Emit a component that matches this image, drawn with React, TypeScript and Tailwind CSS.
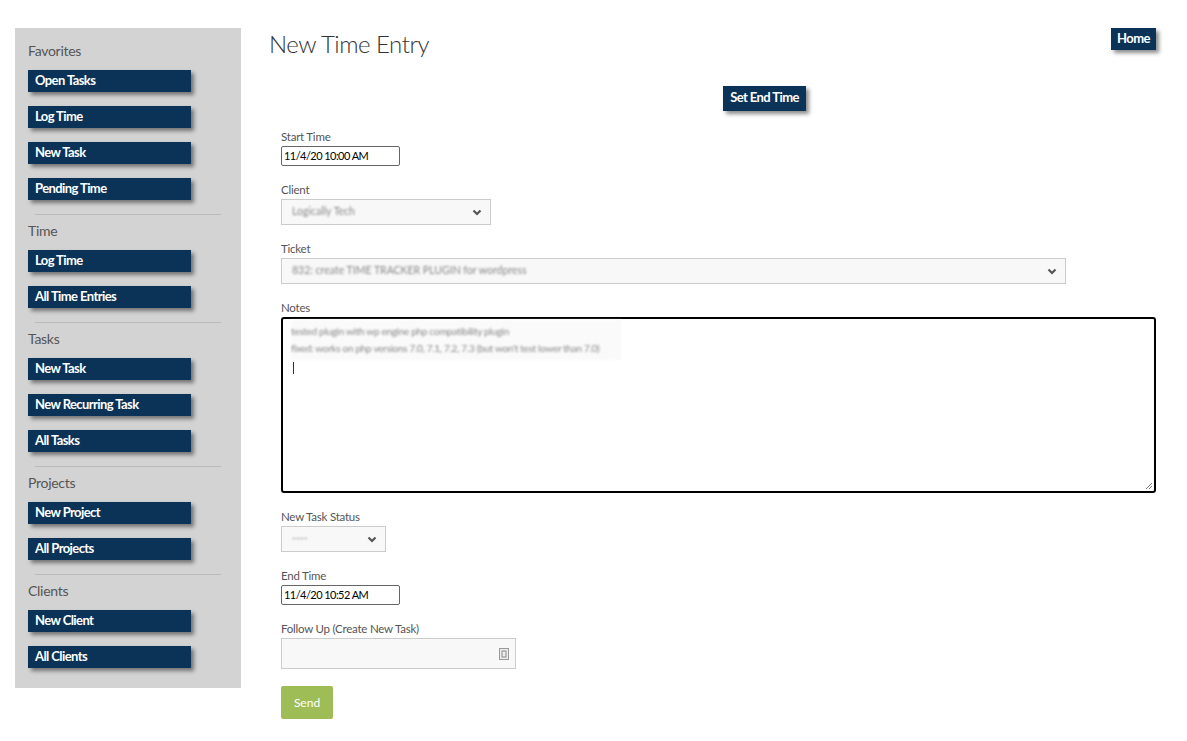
const font = { fontFamily: "Lato, 'Open Sans', sans-serif" };

const sections: { title: string; links: string[] }[] = [
  { title: "Favorites", links: ["Open Tasks", "Log Time", "New Task", "Pending Time"] },
  { title: "Time", links: ["Log Time", "All Time Entries"] },
  { title: "Tasks", links: ["New Task", "New Recurring Task", "All Tasks"] },
  { title: "Projects", links: ["New Project", "All Projects"] },
  { title: "Clients", links: ["New Client", "All Clients"] },
];

function NavButton({ label, className = "" }: { label: string; className?: string }) {
  return (
    <button
      className={`flex h-[22px] items-center bg-[#0b3358] pb-px text-[13px] font-bold tracking-[-0.045em] text-white shadow-[3px_3px_4px_rgba(0,0,0,0.45)] ${className}`}
    >
      {label}
    </button>
  );
}

function Chevron() {
  return (
    <svg width="10" height="7" viewBox="0 0 10 7" className="shrink-0">
      <path d="M1.5 1.5 L5 5 L8.5 1.5" fill="none" stroke="#555" strokeWidth="2.2" />
    </svg>
  );
}

function Select({ width, value }: { width: string; value: string }) {
  return (
    <div
      className={`flex h-[26px] items-center justify-between border border-[#ccc] bg-[#f8f8f8] pl-[10px] pr-[8px] ${width}`}
    >
      <span className="text-[10.5px] text-[#888] blur-[1.3px]">{value}</span>
      <Chevron />
    </div>
  );
}

function Label({ children }: { children: React.ReactNode }) {
  return <div className="h-[16px] text-[11.5px] leading-[16px] tracking-[-0.02em] text-[#555]">{children}</div>;
}

function TimeInput({ value }: { value: string }) {
  return (
    <div className="flex h-[20px] w-[119px] items-center rounded-[2px] border border-[#666] pl-[2px] text-[11px] tracking-[-0.05em] text-black">
      {value}
    </div>
  );
}

export default function App() {
  return (
    <div className="flex min-h-[741px] w-[1187px] bg-white" style={font}>
      <aside className="ml-[15px] mt-[28px] h-[660px] w-[226px] shrink-0 bg-[#d3d3d3] px-[13px] pt-[13px]">
        {sections.map((section, index) => (
          <div key={section.title}>
            {index > 0 && <div className="mx-[7px] mt-[14px] mb-[6px] h-px bg-[#bbb]" />}
            <div className="mb-[9px] h-[20px] text-[14px] leading-[20px] tracking-[-0.02em] text-[#555]">
              {section.title}
            </div>
            <div className="flex flex-col gap-[14px]">
              {section.links.map((link) => (
                <NavButton key={link} label={link} className="w-[163px] pl-[7px]" />
              ))}
            </div>
          </div>
        ))}
      </aside>

      <main className="flex-1 pl-[28px] pr-[32px] pt-[28px]">
        <div className="flex items-start justify-between">
          <h1 className="h-[32px] text-[24px] font-light leading-[32px] tracking-[-0.02em] text-[#333]">
            New Time Entry
          </h1>
          <NavButton label="Home" className="w-[45px] justify-center" />
        </div>

        <div className="mt-[26px] ml-[454px]">
          <button className="flex h-[25px] w-[83px] items-center justify-center bg-[#0b3358] pb-px text-[13px] font-bold tracking-[-0.045em] text-white shadow-[3px_3px_4px_rgba(0,0,0,0.45)]">
            Set End Time
          </button>
        </div>

        <form className="mt-[18px] flex flex-col gap-[16px] pl-[12px]">
          <div className="flex flex-col gap-px">
            <Label>Start Time</Label>
            <TimeInput value="11/4/20 10:00 AM" />
          </div>

          <div className="flex flex-col gap-px">
            <Label>Client</Label>
            <Select width="w-[210px]" value="Logically Tech" />
          </div>

          <div className="flex flex-col gap-px">
            <Label>Ticket</Label>
            <Select width="w-[785px]" value="832: create TIME TRACKER PLUGIN for wordpress" />
          </div>

          <div className="flex flex-col gap-px">
            <Label>Notes</Label>
            <div className="relative h-[176px] w-[875px] rounded-[3px] border-2 border-black pl-[8px] pt-px">
              <div className="w-[330px] whitespace-nowrap bg-[#fafafa] py-[3px] text-[10px] leading-[17px] tracking-[-0.03em] text-[#888] blur-[1.3px]">
                <div>tested plugin with wp engine php compatibility plugin</div>
                <div>fixed: works on php versions 7.0, 7.1, 7.2, 7.3 (but won't test lower than 7.0)</div>
              </div>
              <div className="ml-[2px] mt-[2px] h-[12px] w-px bg-[#333]" />
              <svg width="9" height="9" viewBox="0 0 9 9" className="absolute bottom-[1px] right-[1px]">
                <path d="M8 2 L2 8 M8 5 L5 8" stroke="#777" strokeWidth="1" />
              </svg>
            </div>
          </div>

          <div className="flex flex-col gap-px">
            <Label>New Task Status</Label>
            <Select width="w-[105px]" value="----" />
          </div>

          <div className="flex flex-col gap-px">
            <Label>End Time</Label>
            <TimeInput value="11/4/20 10:52 AM" />
          </div>

          <div className="flex flex-col gap-px">
            <Label>Follow Up (Create New Task)</Label>
            <div className="flex h-[31px] w-[235px] items-center justify-end border border-[#ccc] bg-[#f8f8f8] pr-[6px]">
              <svg width="10" height="12" viewBox="0 0 10 12">
                <rect x="0.5" y="0.5" width="9" height="11" fill="#eee" stroke="#999" />
                <rect x="3" y="3" width="4" height="6" fill="none" stroke="#888" strokeWidth="1" />
              </svg>
            </div>
          </div>

          <div className="mt-px">
            <button className="h-[33px] w-[52px] rounded-[2px] bg-[#9fbd56] text-[12px] text-white">
              Send
            </button>
          </div>
        </form>
      </main>
    </div>
  );
}
